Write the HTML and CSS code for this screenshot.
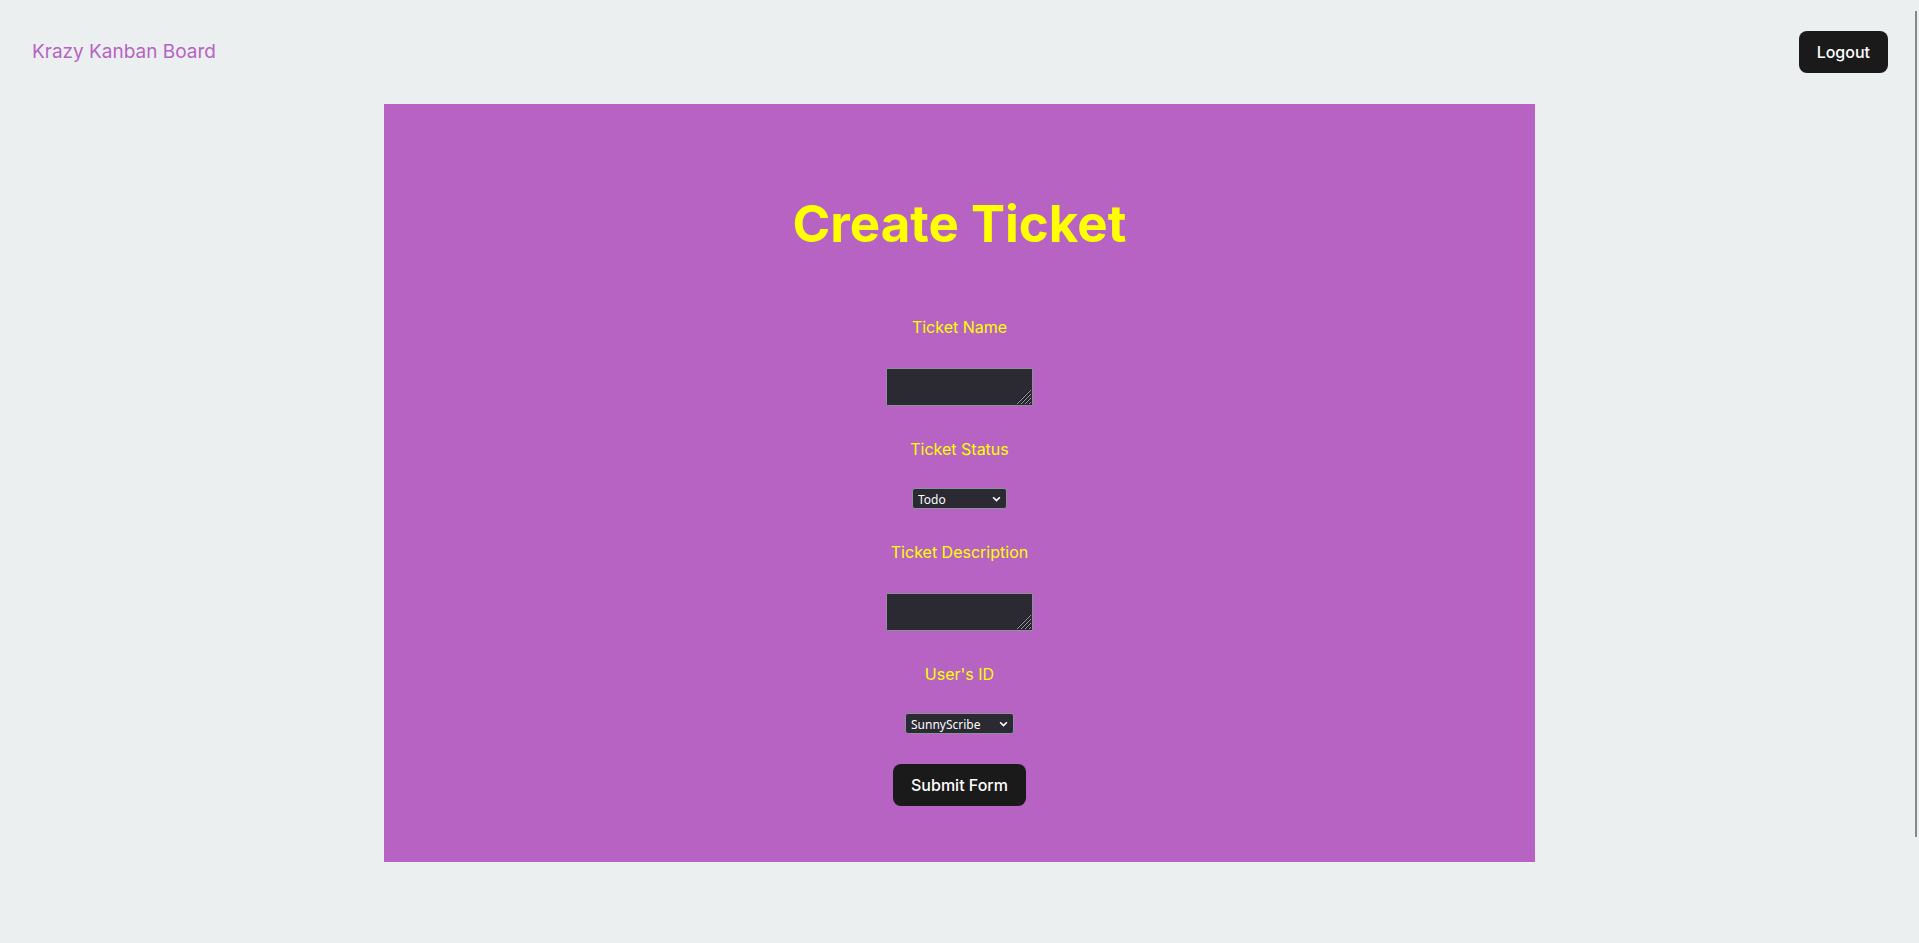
FILE: index.html
```html
<!DOCTYPE html>
<html lang="en">
<head>
<meta charset="utf-8">
<title>Krazy Kanban Board</title>
<link rel="stylesheet" href="styles.css">
</head>
<body>
<header class="nav">
  <a class="brand" href="#">Krazy Kanban Board</a>
  <button class="btn" type="button">Logout</button>
</header>
<main class="panel">
  <h1 class="title">Create Ticket</h1>
  <form class="form">
    <div class="field">
      <label for="name">Ticket Name</label>
      <div class="area">
        <textarea id="name"></textarea>
        <svg class="grip" viewBox="0 0 15 15" aria-hidden="true"><path class="shade" d="M0 13L13 0M4 13L13 4M8 13L13 8M11 14L14 11"/><path d="M0 14L14 0M4 14L14 4M8 14L14 8M12 14L14 12"/></svg>
      </div>
    </div>
    <div class="field field-select">
      <label for="status">Ticket Status</label>
      <div class="pick pick-status">
        <select id="status"><option>Todo</option><option>In Progress</option><option>Done</option></select>
        <svg class="chevron" viewBox="0 0 8 6" aria-hidden="true"><path d="M1 1L4 4L7 1"/></svg>
      </div>
    </div>
    <div class="field">
      <label for="description">Ticket Description</label>
      <div class="area">
        <textarea id="description"></textarea>
        <svg class="grip" viewBox="0 0 15 15" aria-hidden="true"><path class="shade" d="M0 13L13 0M4 13L13 4M8 13L13 8M11 14L14 11"/><path d="M0 14L14 0M4 14L14 4M8 14L14 8M12 14L14 12"/></svg>
      </div>
    </div>
    <div class="field field-select">
      <label for="user">User's ID</label>
      <div class="pick pick-user">
        <select id="user"><option>SunnyScribe</option></select>
        <svg class="chevron" viewBox="0 0 8 6" aria-hidden="true"><path d="M1 1L4 4L7 1"/></svg>
      </div>
    </div>
    <button class="btn" type="submit">Submit Form</button>
  </form>
</main>
<div class="scroll-thumb" aria-hidden="true"></div>
</body>
</html>
```
FILE: styles.css
```css
* { box-sizing: border-box; }
body {
  margin: 0;
  background: #ebeff0;
  font-family: Inter, "Liberation Sans", sans-serif;
  font-size: 16px;
  line-height: 24px;
}
.nav {
  display: flex;
  align-items: center;
  justify-content: space-between;
  padding: 31px 31px 31px 32px;
}
.brand {
  color: #b663c3;
  font-size: 19px;
  text-decoration: none;
}
.btn {
  padding: 8px 17px;
  border: 1px solid transparent;
  border-radius: 8px;
  background: #1a1a1a;
  color: #fff;
  font-family: inherit;
  font-size: 16px;
  font-weight: 500;
  line-height: 24px;
  cursor: pointer;
}
.panel {
  width: 60%;
  margin: 0 auto;
  padding: 88px 32px 56px;
  background: #b663c3;
  color: #ff0;
  text-align: center;
}
.title {
  margin: 0 0 58px;
  font-size: 51px;
  font-weight: 700;
  line-height: 64px;
}
.form {
  display: flex;
  flex-direction: column;
  align-items: center;
  gap: 30px;
}
.field {
  display: flex;
  flex-direction: column;
  align-items: center;
  gap: 30px;
}
.field label {
  padding-top: 2px;
  line-height: 22px;
}
.field-select { gap: 28px; }
.area, .pick { position: relative; display: flex; }
textarea {
  width: 147px;
  height: 38px;
  border: 1px solid #8f8f9d;
  border-radius: 1px;
  background: #2b2a33;
  color: #fff;
  resize: none;
}
.grip {
  position: absolute;
  right: 1px;
  bottom: 1px;
  width: 15px;
  height: 15px;
  fill: none;
  stroke: #9b9aa3;
  pointer-events: none;
}
.grip .shade { stroke: #17161c; }
select {
  appearance: none;
  width: 100%;
  height: 21px;
  padding: 1px 5px 0;
  border: 1px solid #8f8f9d;
  border-radius: 3px;
  background: #2b2a33;
  color: #fbfbfe;
  font-family: "Noto Sans", sans-serif;
  font-size: 12px;
}
.pick-status { width: 95px; }
.pick-user { width: 109px; }
.chevron {
  position: absolute;
  top: 8px;
  right: 6px;
  width: 9px;
  height: 7px;
  fill: none;
  stroke: #fbfbfe;
  stroke-width: 1.5;
  pointer-events: none;
}
.scroll-thumb {
  position: fixed;
  top: 11px;
  right: 2px;
  bottom: 106px;
  width: 2px;
  background: #89898c;
}
```
